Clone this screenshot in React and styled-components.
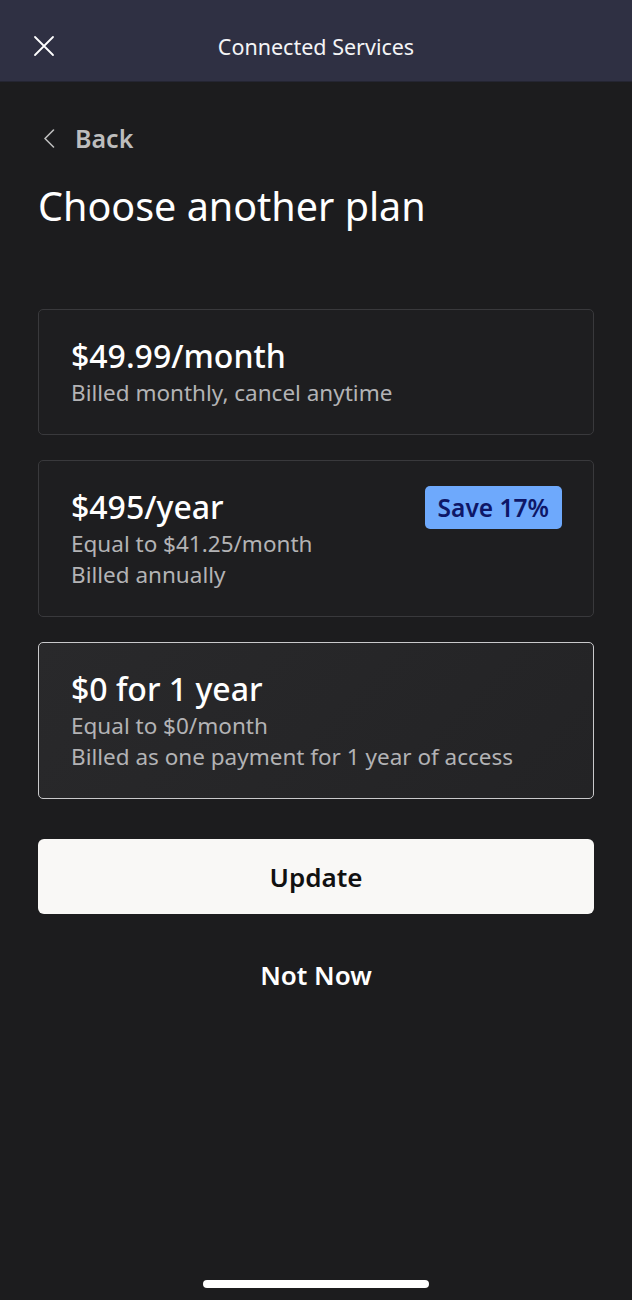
import React, { useState } from "react";
import styled, { createGlobalStyle } from "styled-components";

const GlobalStyle = createGlobalStyle`
  html, body {
    margin: 0;
    padding: 0;
    background: #1c1c1e;
  }
  body {
    font-family: "Noto Sans", "Open Sans", sans-serif;
    -webkit-font-smoothing: antialiased;
  }
  * {
    box-sizing: border-box;
  }
`;

const Screen = styled.div`
  display: flex;
  flex-direction: column;
  min-height: 1300px;
  background: #1c1c1e;
  color: #ffffff;
`;

const Header = styled.header`
  position: relative;
  display: flex;
  align-items: center;
  justify-content: center;
  height: 82px;
  background: #2f3043;
  border-bottom: 1px solid #242532;
`;

const CloseButton = styled.button`
  position: absolute;
  left: 31px;
  top: 33px;
  display: flex;
  padding: 0;
  border: none;
  background: none;
  cursor: pointer;
`;

const HeaderTitle = styled.h1`
  margin: 0;
  padding-top: 12px;
  font-size: 21.5px;
  font-weight: 400;
  color: #f4f4f6;
`;

const Content = styled.main`
  display: flex;
  flex-direction: column;
  padding: 0 38px;
`;

const BackLink = styled.button`
  display: flex;
  align-items: center;
  gap: 20px;
  height: 32px;
  margin-top: 40px;
  padding: 0 0 0 5px;
  border: none;
  background: none;
  font-family: inherit;
  font-size: 25px;
  font-weight: 600;
  color: #bdbdbd;
  cursor: pointer;
`;

const PageTitle = styled.h2`
  margin: 28px 0 0;
  font-size: 39.5px;
  line-height: 48px;
  font-weight: 400;
  color: #ffffff;
`;

const PlanList = styled.div`
  display: flex;
  flex-direction: column;
  gap: 25px;
  margin-top: 79px;
`;

const PlanCard = styled.button`
  display: flex;
  align-items: flex-start;
  justify-content: space-between;
  width: 100%;
  padding: 26px 32px 26px;
  border: 1px solid ${(p) => (p.$selected ? "#c9c9cb" : "#39393c")};
  border-radius: 5px;
  background: ${(p) =>
    p.$selected
      ? "linear-gradient(135deg, #29292b 0%, #232325 100%)"
      : "#1e1e20"};
  font-family: inherit;
  text-align: left;
  cursor: pointer;
`;

const PlanText = styled.div`
  display: flex;
  flex-direction: column;
`;

const PlanPrice = styled.div`
  margin-bottom: 1px;
  font-size: 32px;
  line-height: 40px;
  font-weight: 500;
  color: #ffffff;
`;

const PlanNote = styled.div`
  font-size: 22.5px;
  line-height: 31px;
  font-weight: 400;
  color: #b3b3b5;
`;

const SaveBadge = styled.span`
  margin-top: -1px;
  margin-right: -1px;
  padding: 0 13px;
  height: 43px;
  display: flex;
  align-items: center;
  border-radius: 5px;
  background: #6ea9fc;
  font-size: 24.5px;
  font-weight: 600;
  color: #0e1767;
  white-space: nowrap;
`;

const PrimaryButton = styled.button`
  height: 75px;
  margin-top: 40px;
  border: none;
  border-radius: 6px;
  background: #f9f8f6;
  font-family: inherit;
  font-size: 26px;
  font-weight: 600;
  color: #111111;
  cursor: pointer;
`;

const TextButton = styled.button`
  align-self: center;
  height: 30px;
  margin-top: 46px;
  padding: 0;
  border: none;
  background: none;
  font-family: inherit;
  font-size: 26px;
  line-height: 30px;
  font-weight: 600;
  color: #ffffff;
  cursor: pointer;
`;

const HomeBar = styled.div`
  align-self: center;
  width: 226px;
  height: 8px;
  margin-top: auto;
  margin-bottom: 12px;
  border-radius: 4px;
  background: #ffffff;
`;

const plans = [
  { id: "monthly", price: "$49.99/month", notes: ["Billed monthly, cancel anytime"] },
  {
    id: "annual",
    price: "$495/year",
    notes: ["Equal to $41.25/month", "Billed annually"],
    badge: "Save 17%",
  },
  {
    id: "free",
    price: "$0 for 1 year",
    notes: ["Equal to $0/month", "Billed as one payment for 1 year of access"],
  },
];

export default function App() {
  const [selected, setSelected] = useState("free");

  return (
    <>
      <GlobalStyle />
      <Screen>
        <Header>
          <CloseButton aria-label="Close">
            <svg width="26" height="26" viewBox="0 0 26 26" fill="none">
              <path d="M4 4 L22 22 M22 4 L4 22" stroke="#ffffff" strokeWidth="1.8" strokeLinecap="round" />
            </svg>
          </CloseButton>
          <HeaderTitle>Connected Services</HeaderTitle>
        </Header>
        <Content>
          <BackLink>
            <svg width="12" height="19" viewBox="0 0 12 19" fill="none">
              <path d="M10.5 1 L2 9.5 L10.5 18" stroke="#bdbdbd" strokeWidth="1.6" strokeLinecap="round" strokeLinejoin="round" />
            </svg>
            Back
          </BackLink>
          <PageTitle>Choose another plan</PageTitle>
          <PlanList>
            {plans.map((plan) => (
              <PlanCard
                key={plan.id}
                $selected={selected === plan.id}
                onClick={() => setSelected(plan.id)}
              >
                <PlanText>
                  <PlanPrice>{plan.price}</PlanPrice>
                  {plan.notes.map((note) => (
                    <PlanNote key={note}>{note}</PlanNote>
                  ))}
                </PlanText>
                {plan.badge && <SaveBadge>{plan.badge}</SaveBadge>}
              </PlanCard>
            ))}
          </PlanList>
          <PrimaryButton>Update</PrimaryButton>
          <TextButton>Not Now</TextButton>
        </Content>
        <HomeBar />
      </Screen>
    </>
  );
}
